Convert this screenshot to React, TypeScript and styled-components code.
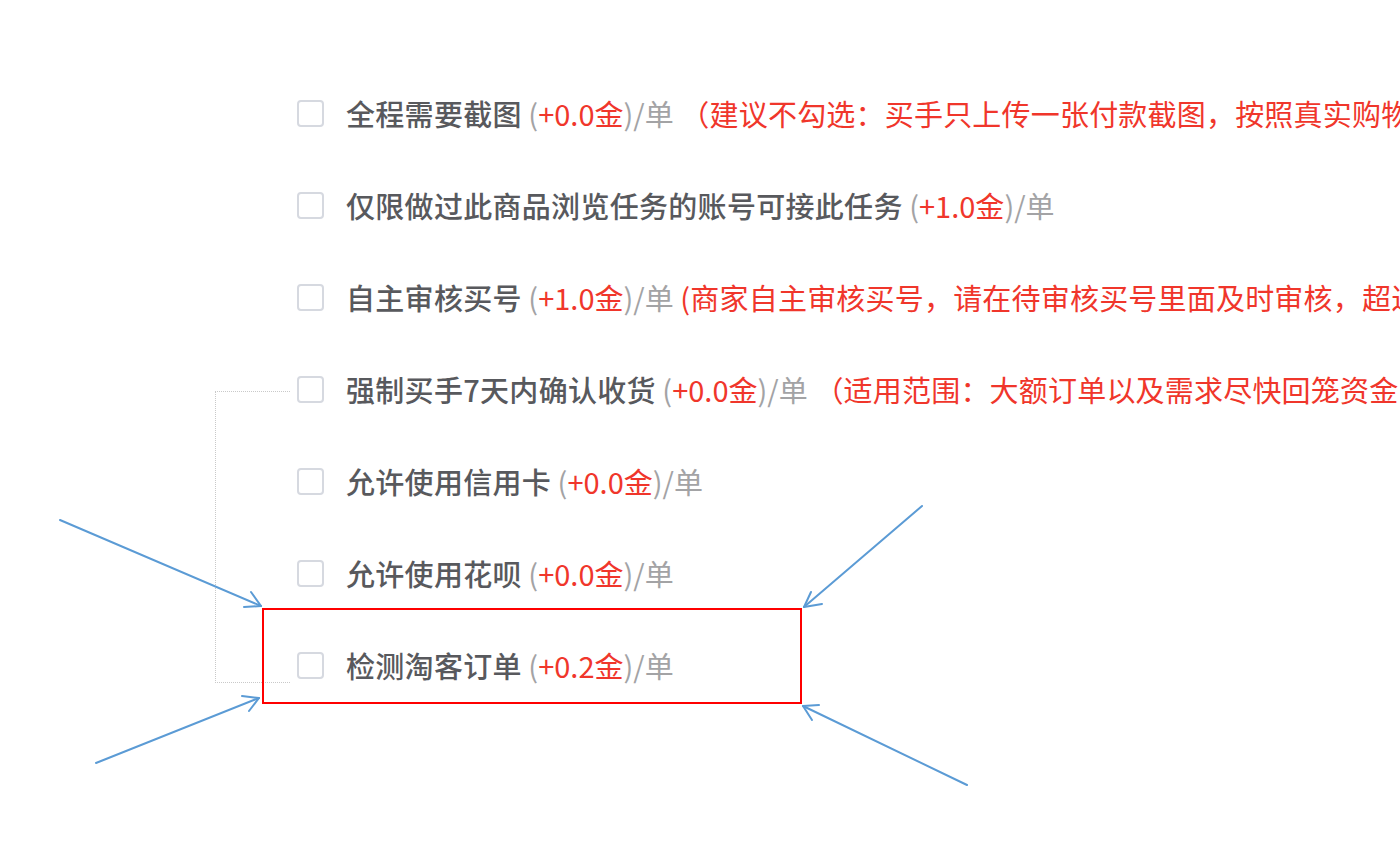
import React from 'react'
import styled, { createGlobalStyle } from 'styled-components'

const GlobalStyle = createGlobalStyle`
  html, body {
    margin: 0;
    padding: 0;
    background: #ffffff;
  }
  body {
    font-family: "Noto Sans CJK SC", "Noto Sans", sans-serif;
  }
`

type Option = {
  label: string
  price: string
  note?: string
}

const options: Option[] = [
  { label: '全程需要截图', price: '+0.0金', note: ' （建议不勾选：买手只上传一张付款截图，按照真实购物流程操作）' },
  { label: '仅限做过此商品浏览任务的账号可接此任务', price: '+1.0金' },
  { label: '自主审核买号', price: '+1.0金', note: ' (商家自主审核买号，请在待审核买号里面及时审核，超过时间未审核将自动通过)' },
  { label: '强制买手7天内确认收货', price: '+0.0金', note: ' （适用范围：大额订单以及需求尽快回笼资金的商家）' },
  { label: '允许使用信用卡', price: '+0.0金' },
  { label: '允许使用花呗', price: '+0.0金' },
  { label: '检测淘客订单', price: '+0.2金' },
]

// arrows drawn over the screenshot: [start, tip, head1, head2]
const arrows: number[][][] = [
  [[60, 520], [261, 606], [244, 607], [251, 592]],
  [[96, 763], [259, 698], [242, 696], [249, 711]],
  [[922, 506], [804, 607], [822, 604], [811, 592]],
  [[967, 785], [803, 706], [819, 705], [812, 720]],
]

function App() {
  return (
    <>
      <GlobalStyle />
      <Page>
        <List>
          {options.map((o) => (
            <Row key={o.label}>
              <Box />
              <Text>
                <Label>{o.label}</Label>
                <Muted> (</Muted>
                <Price>{o.price}</Price>
                <Muted>)/单</Muted>
                {o.note ? <Note>{o.note}</Note> : null}
              </Text>
            </Row>
          ))}
        </List>

        <Bracket />
        <RedFrame />
        <ArrowLayer width="1400" height="854" viewBox="0 0 1400 854">
          {arrows.map(([s, t, h1, h2], i) => (
            <g key={i}>
              <line x1={s[0]} y1={s[1]} x2={t[0]} y2={t[1]} />
              <polyline points={`${h1[0]},${h1[1]} ${t[0]},${t[1]} ${h2[0]},${h2[1]}`} />
            </g>
          ))}
        </ArrowLayer>
      </Page>
    </>
  )
}

export default App

const Page = styled.div`
  position: relative;
  width: 1400px;
  height: 854px;
  overflow: hidden;
  background: #ffffff;
`

const List = styled.div`
  display: flex;
  flex-direction: column;
  padding-top: 67px;
  padding-left: 297px;
`

const Row = styled.div`
  display: flex;
  align-items: center;
  gap: 22px;
  height: 92px;
  white-space: nowrap;
`

const Box = styled.span`
  flex: none;
  box-sizing: border-box;
  width: 27px;
  height: 27px;
  border: 2px solid #d6d9e0;
  border-radius: 4px;
  background: #ffffff;
`

const Text = styled.span`
  font-size: 29px;
  line-height: 1;
  white-space: pre;
`

const Label = styled.span`
  color: #58595d;
  font-weight: 500;
  letter-spacing: 0.3px;
`

const Muted = styled.span`
  color: #a3a3a5;
`

const Price = styled.span`
  color: #f0362b;
`

const Note = styled.span`
  color: #f0362b;
  letter-spacing: 0.2px;
`

const Bracket = styled.div`
  position: absolute;
  left: 215px;
  top: 391px;
  width: 74px;
  height: 290px;
  border: 1px dotted #c9c9c9;
  border-right: none;
`

const RedFrame = styled.div`
  position: absolute;
  left: 262px;
  top: 608px;
  width: 540px;
  height: 96px;
  box-sizing: border-box;
  border: 2px solid #ff0000;
`

const ArrowLayer = styled.svg`
  position: absolute;
  left: 0;
  top: 0;
  pointer-events: none;

  line,
  polyline {
    fill: none;
    stroke: #5b9bd5;
    stroke-width: 2;
    stroke-linecap: round;
    stroke-linejoin: round;
  }
`
